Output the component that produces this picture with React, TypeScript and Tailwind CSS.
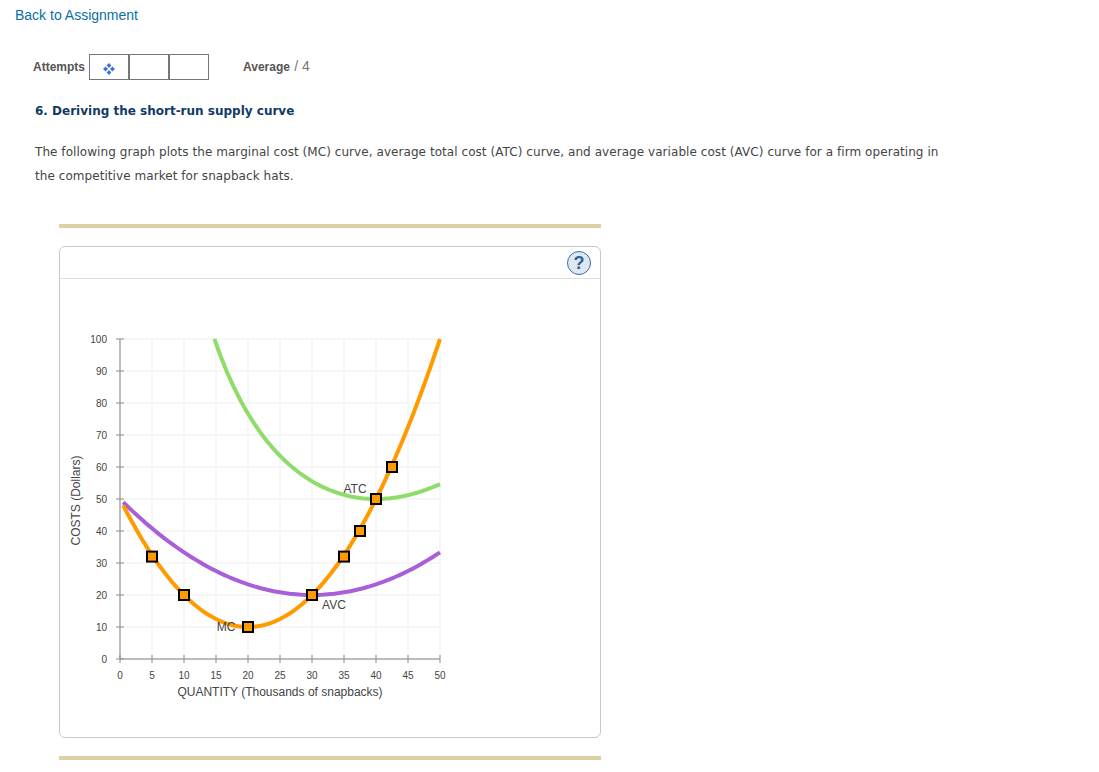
const toX = (q: number) => q * 6.4;
const toY = (c: number) => 320 - c * 3.2;

const avc = (q: number) => 20 + ((q - 30) * (q - 30)) / 30;
const atc = (q: number) => avc(q) + 1066.67 / q;
const mc = (q: number) => 20 + ((q - 30) * (q - 10)) / 10;

const buildPath = (fn: (q: number) => number, from: number, to: number) => {
  const pts: string[] = [];
  for (let q = from; q < to; q += 0.5) {
    pts.push(`${toX(q).toFixed(1)},${toY(fn(q)).toFixed(1)}`);
  }
  pts.push(`${toX(to).toFixed(1)},${toY(fn(to)).toFixed(1)}`);
  return "M" + pts.join(" L");
};

const xTicks = [0, 5, 10, 15, 20, 25, 30, 35, 40, 45, 50];
const yTicks = [0, 10, 20, 30, 40, 50, 60, 70, 80, 90, 100];
const markers = [
  [5, 32],
  [10, 20],
  [20, 10],
  [30, 20],
  [35, 32],
  [37.5, 40],
  [40, 50],
  [42.5, 60],
];

function Chart() {
  return (
    <svg width="540" height="458" viewBox="-60 -60 540 458" className="block" style={{ fontFamily: '"Liberation Sans", sans-serif' }}>
      {xTicks.slice(1).map((q) => (
        <line key={q} x1={toX(q)} x2={toX(q)} y1={0} y2={320} stroke="#f5f5f5" strokeWidth="1.5" />
      ))}
      {yTicks.slice(1).map((c) => (
        <line key={c} x1={0} x2={320} y1={toY(c)} y2={toY(c)} stroke="#f5f5f5" strokeWidth="1.5" />
      ))}
      <line x1={0} x2={0} y1={0} y2={320} stroke="#a6a6a6" strokeWidth="1.5" />
      <line x1={0} x2={320} y1={320} y2={320} stroke="#a6a6a6" strokeWidth="1.5" />
      {xTicks.map((q) => (
        <g key={q}>
          <line x1={toX(q)} x2={toX(q)} y1={316} y2={324} stroke="#8c8c8c" />
          <text x={toX(q)} y={340} textAnchor="middle" fontSize="10" fill="#444">{q}</text>
        </g>
      ))}
      {yTicks.map((c) => (
        <g key={c}>
          <line x1={-4} x2={4} y1={toY(c)} y2={toY(c)} stroke="#8c8c8c" />
          <text x={-13} y={toY(c) + 3.5} textAnchor="end" fontSize="10" fill="#444">{c}</text>
        </g>
      ))}
      <path d={buildPath(atc, 14.75, 50)} fill="none" stroke="#8fdc6a" strokeWidth="4" />
      <path d={buildPath(avc, 0.5, 50)} fill="none" stroke="#a95fd6" strokeWidth="4" />
      <path d={buildPath(mc, 0.5, 50)} fill="none" stroke="#ff9a00" strokeWidth="4" />
      {markers.map(([q, c]) => (
        <rect key={q} x={toX(q) - 5} y={toY(c) - 5} width="10" height="10" fill="#ff9a00" stroke="#000" strokeWidth="2" />
      ))}
      <text x={235} y={154} textAnchor="middle" fontSize="12" fill="#444">ATC</text>
      <text x={214} y={270} textAnchor="middle" fontSize="12" fill="#444">AVC</text>
      <text x={106} y={292} textAnchor="middle" fontSize="12" fill="#444">MC</text>
      <text x={160} y={357} textAnchor="middle" fontSize="12" fill="#444">QUANTITY (Thousands of snapbacks)</text>
      <text transform="translate(-40 161.5) rotate(-90)" textAnchor="middle" fontSize="12" fill="#444">COSTS (Dollars)</text>
    </svg>
  );
}

export default function App() {
  return (
    <div className="bg-white min-h-[772px] font-['Liberation_Sans',sans-serif]">
      <div className="pt-[7px] pl-[15px]">
        <a href="#" className="text-sm leading-4 text-[#0b6fa4] block">Back to Assignment</a>
      </div>

      <div className="flex items-center mt-[31px] ml-[33px] h-[26px]">
        <span className="text-xs font-bold text-[#555] w-[56px]">Attempts</span>
        <div className="flex border border-[#777] h-[26px] w-[120px]">
          <div className="w-10 flex items-center justify-center border-r-2 border-[#777]">
            <svg width="12" height="12" viewBox="0 0 12 12" fill="#3f6fd8" className="mt-[3px]">
              <path d="M6 0 8.4 2.6 6 5 3.6 2.6Z" />
              <path d="M6 7 8.4 9.4 6 12 3.6 9.4Z" />
              <path d="M2.6 3.6 5 6 2.6 8.4 0 6Z" />
              <path d="M9.4 3.6 12 6 9.4 8.4 7 6Z" />
            </svg>
          </div>
          <div className="w-10 border-r-2 border-[#777]" />
          <div className="flex-1" />
        </div>
        <span className="ml-[34px] text-xs leading-4 font-bold text-[#555] mb-[2px]">Average <span className="ml-px text-sm leading-4 font-normal text-[#777]">/ 4</span></span>
      </div>

      <h2 className="ml-[35px] mt-[23px] text-xs leading-4 font-bold text-[#0f3b66] font-['DejaVu_Sans',sans-serif]">6. Deriving the short-run supply curve</h2>

      <p className="ml-[35px] mt-[21px] w-[906px] text-xs leading-6 tracking-[0.06px] text-[#444] font-['DejaVu_Sans',sans-serif]">
        The following graph plots the marginal cost (MC) curve, average total cost (ATC) curve, and average variable cost (AVC) curve for a firm operating in the competitive market for snapback hats.
      </p>

      <div className="ml-[59px] mt-[36px] w-[542px]">
        <div className="h-1 bg-[#ddd0a5]" />
        <div className="mt-[18px] border border-[#c8c8c8] rounded-md h-[492px]">
          <div className="h-[32px] border-b border-[#dedede] flex items-center justify-end pr-[9px]">
            <div className="w-[24px] h-[24px] rounded-full bg-[#dfe7f0] border-[1.5px] border-[#3a6ea5] flex items-center justify-center text-[#2f5f96] text-lg font-bold leading-none">?</div>
          </div>
          <Chart />
        </div>
        <div className="h-1 bg-[#ddd0a5] mt-[18px]" />
      </div>
    </div>
  );
}
